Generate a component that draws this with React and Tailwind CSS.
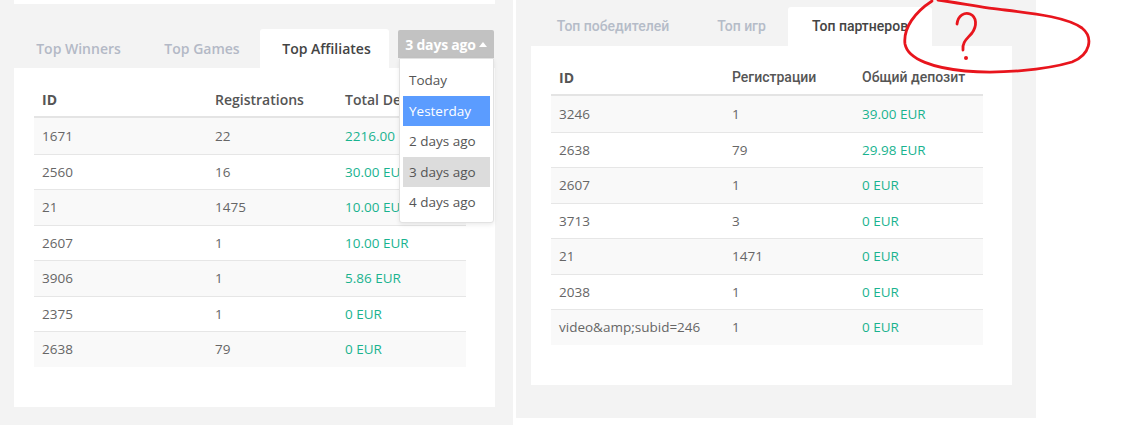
import React from "react";

const leftRows = [
  ["1671", "22", "2216.00 EUR"],
  ["2560", "16", "30.00 EUR"],
  ["21", "1475", "10.00 EUR"],
  ["2607", "1", "10.00 EUR"],
  ["3906", "1", "5.86 EUR"],
  ["2375", "1", "0 EUR"],
  ["2638", "79", "0 EUR"],
];

const rightRows = [
  ["3246", "1", "39.00 EUR"],
  ["2638", "79", "29.98 EUR"],
  ["2607", "1", "0 EUR"],
  ["3713", "3", "0 EUR"],
  ["21", "1471", "0 EUR"],
  ["2038", "1", "0 EUR"],
  ["video&amp;subid=246", "1", "0 EUR"],
];

const periods = ["Today", "Yesterday", "2 days ago", "3 days ago", "4 days ago"];

function Table({ head, rows, cyr }) {
  const headFont = cyr ? "font-['Roboto',sans-serif] font-medium" : "font-semibold";
  return (
    <div className="w-[432px]">
      <div className="grid grid-cols-[173px_130px_1fr] h-[35px] items-center border-b-2 border-[#e4e4e4] text-[14px] text-[#555]">
        <div className="px-2 font-bold">{head[0]}</div>
        <div className={`px-2 ${headFont}`}>{head[1]}</div>
        <div className={`px-2 whitespace-nowrap overflow-hidden ${headFont}`}>{head[2]}</div>
      </div>
      {rows.map((r, i) => (
        <div
          key={i}
          className={`grid grid-cols-[173px_130px_1fr] h-[35.5px] items-center text-[13.5px] text-[#666] ${
            i > 0 ? "border-t border-[#e6e6e6]" : ""
          } ${i % 2 === 0 ? "bg-[#f9f9f9]" : "bg-white"}`}
        >
          <div className="px-2 whitespace-nowrap">{r[0]}</div>
          <div className="px-2">{r[1]}</div>
          <div className="px-2 text-[#19b38f] whitespace-nowrap">{r[2]}</div>
        </div>
      ))}
    </div>
  );
}

function LeftShot() {
  return (
    <div className="w-[513px] h-[425px] bg-[#f3f3f3] pl-[14px] shrink-0 font-['Open_Sans',sans-serif]">
      <div className="w-[481px] h-[4px] bg-white" />
      <div className="flex items-start mt-[25px] h-[39px] text-[14px] font-semibold">
        <div className="w-[127px] h-[39px] flex items-center justify-center pl-[2px] text-[#b3b9c6]">Top Winners</div>
        <div className="w-[119px] h-[39px] flex items-center justify-center pl-[3px] text-[#b3b9c6]">Top Games</div>
        <div className="w-[129px] h-[39px] flex items-center justify-center pl-[4px] bg-white rounded-t-[3px] text-[#444]">
          Top Affiliates
        </div>
        <div className="relative ml-[9px] mt-[1px]">
          <div className="w-[96px] h-[28px] bg-[#c2c2c2] text-white font-bold flex items-center justify-center gap-[3px] rounded-t-[2px]">
            <span className="tracking-[-0.2px]">3 days ago</span>
            <svg width="8" height="5" viewBox="0 0 8 5" className="mt-[1px]">
              <path d="M0 5 L4 0 L8 5 Z" fill="#fff" />
            </svg>
          </div>
          <div className="absolute left-[1px] top-[28px] z-10 w-[95px] bg-white border border-[#e2e2e2] rounded-b-[3px] shadow-[0_2px_4px_rgba(0,0,0,0.08)] pt-[6px] pb-[4px] px-[3px] font-normal text-[13.5px] text-[#555]">
            {periods.map((p) => (
              <div
                key={p}
                className={`h-[30.5px] flex items-center pl-[6px] ${
                  p === "Yesterday" ? "bg-[#5b9cff] text-white" : p === "3 days ago" ? "bg-[#dcdcdc]" : ""
                }`}
              >
                {p}
              </div>
            ))}
          </div>
        </div>
      </div>
      <div className="w-[481px] h-[339px] bg-white pt-[15px] pl-[20px]">
        <Table head={["ID", "Registrations", "Total Deposit"]} rows={leftRows} />
      </div>
    </div>
  );
}

function RightShot() {
  return (
    <div className="w-[520px] h-[418px] bg-[#f3f3f3] pl-[15px] shrink-0 font-['Open_Sans',sans-serif]">
      <div className="flex mt-[7px] h-[39px] text-[14px] font-['Roboto',sans-serif] font-medium">
        <div className="w-[164px] flex items-center justify-center text-[#b5bcc8]">Топ победителей</div>
        <div className="w-[93px] flex items-center justify-center text-[#b5bcc8]">Топ игр</div>
        <div className="w-[144px] flex items-center justify-center bg-white rounded-t-[3px] text-[#444]">
          Топ партнеров
        </div>
      </div>
      <div className="w-[481px] h-[339px] bg-white pt-[15px] pl-[20px]">
        <Table head={["ID", "Регистрации", "Общий депозит"]} rows={rightRows} cyr />
      </div>
    </div>
  );
}

export default function App() {
  return (
    <div className="relative w-[1126px] h-[425px] bg-white flex overflow-hidden">
      <LeftShot />
      <div className="w-[3px] shrink-0" />
      <RightShot />
      <svg
        className="absolute left-0 top-0 pointer-events-none"
        width="1126"
        height="425"
        viewBox="0 0 1126 425"
      >
        <path
          d="M932 1 C915 12 903 28 905 44 C908 60 935 68 965 71 C1000 74 1045 70 1072 62 C1090 55 1094 38 1082 28 C1068 18 1040 14 1005 10 C985 8 960 3 938 0"
          fill="none"
          stroke="#e8151d"
          strokeWidth="2.8"
          strokeLinecap="round"
        />
        <path
          d="M957 24 C958 15 965 12 970 14 C977 17 977 26 972 33 C967 39 962 42 963 50"
          fill="none"
          stroke="#e8151d"
          strokeWidth="2.8"
          strokeLinecap="round"
        />
        <circle cx="966" cy="58" r="2" fill="#e8151d" />
      </svg>
    </div>
  );
}
